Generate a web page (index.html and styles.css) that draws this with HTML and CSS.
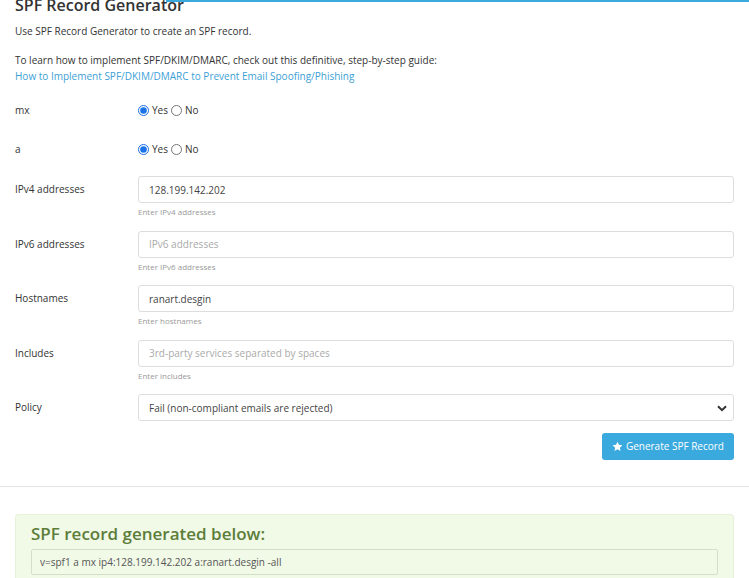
FILE: index.html
```html
<!DOCTYPE html>
<html lang="en">
<head>
    <meta charset="UTF-8">
    <meta name="viewport" content="width=device-width, initial-scale=1.0">
    <title>SPF Record Generator</title>
<link rel="stylesheet" href="styles.css">
</head>
<body>
    <div class="top-line"></div>
    <div class="page">
        <h1>SPF Record Generator</h1>
        <p class="intro">Use SPF Record Generator to create an SPF record.</p>
        <p class="intro guide">To learn how to implement SPF/DKIM/DMARC, check out this definitive, step-by-step guide:<br>
            <a href="#">How to Implement SPF/DKIM/DMARC to Prevent Email Spoofing/Phishing</a></p>

        <form class="spf-form">
            <div class="row radio-row">
                <label class="label">mx</label>
                <div class="control">
                    <label class="radio"><input type="radio" name="mx" checked> Yes</label>
                    <label class="radio"><input type="radio" name="mx"> No</label>
                </div>
            </div>
            <div class="row radio-row">
                <label class="label">a</label>
                <div class="control">
                    <label class="radio"><input type="radio" name="a" checked> Yes</label>
                    <label class="radio"><input type="radio" name="a"> No</label>
                </div>
            </div>
            <div class="row">
                <label class="label">IPv4 addresses</label>
                <div class="control">
                    <input type="text" class="field" value="128.199.142.202" placeholder="IPv4 addresses">
                    <small class="help">Enter IPv4 addresses</small>
                </div>
            </div>
            <div class="row">
                <label class="label">IPv6 addresses</label>
                <div class="control">
                    <input type="text" class="field" placeholder="IPv6 addresses">
                    <small class="help">Enter IPv6 addresses</small>
                </div>
            </div>
            <div class="row">
                <label class="label">Hostnames</label>
                <div class="control">
                    <input type="text" class="field" value="ranart.desgin" placeholder="Hostnames">
                    <small class="help">Enter hostnames</small>
                </div>
            </div>
            <div class="row">
                <label class="label">Includes</label>
                <div class="control">
                    <input type="text" class="field" placeholder="3rd-party services separated by spaces">
                    <small class="help">Enter includes</small>
                </div>
            </div>
            <div class="row">
                <label class="label">Policy</label>
                <div class="control">
                    <div class="select-wrap">
                        <select class="field">
                            <option>Fail (non-compliant emails are rejected)</option>
                            <option>SoftFail (non-compliant emails are accepted but marked)</option>
                            <option>Neutral</option>
                        </select>
                        <svg class="chevron" width="10" height="7" viewBox="0 0 10 7"><path d="M1 1.2 5 5.2 9 1.2" fill="none" stroke="#333" stroke-width="2"/></svg>
                    </div>
                </div>
            </div>
            <div class="actions">
                <button type="button" class="btn">
                    <svg width="11" height="11" viewBox="0 0 24 24"><path d="M12 1.5l3.2 6.9 7.5.9-5.5 5.2 1.4 7.4L12 18.2l-6.6 3.7 1.4-7.4L1.3 9.3l7.5-.9z" fill="#fff"/></svg>
                    Generate SPF Record
                </button>
            </div>
        </form>
    </div>
    <hr class="divider">
    <div class="page">
        <div class="result">
            <h2>SPF record generated below:</h2>
            <input type="text" class="record" value="v=spf1 a mx ip4:128.199.142.202 a:ranart.desgin -all" readonly>
        </div>
    </div>
</body>
</html>
```

FILE: styles.css
```css
body {
    font-family: "Open Sans", "Noto Sans", sans-serif;
    font-size: 10px;
    color: #333;
    margin: 0;
    padding: 0;
    background: #fff;
    overflow: hidden;
}

.top-line {
    height: 2px;
    margin-left: 166px;
    background: #3aa9de;
}

.page {
    padding: 0 15px;
}

h1 {
    font-size: 16px;
    font-weight: 600;
    color: #333;
    margin: -8px 0 0;
    line-height: 22px;
}

.intro {
    margin: 7px 0 0;
    line-height: 16px;
}

.guide {
    margin-top: 13px;
}

a {
    color: #3c9fd6;
    text-decoration: none;
}

.spf-form {
    margin-top: 12px;
}

.row {
    display: flex;
    align-items: flex-start;
    margin-bottom: 13.5px;
}

.radio-row {
    height: 28px;
    margin-bottom: 11px;
    align-items: center;
}

.radio-row + .row:not(.radio-row) {
    margin-top: 13px;
}

.label {
    width: 123px;
    flex-shrink: 0;
    line-height: 27px;
}

.control {
    flex: 1;
    display: flex;
    flex-direction: column;
}

.radio-row .control {
    flex-direction: row;
    align-items: center;
}

.radio {
    display: inline-flex;
    align-items: center;
    margin-right: 3px;
}

.radio input {
    margin: 0 3px 0 0;
    width: 11px;
    height: 11px;
    accent-color: #1a73e8;
}

.field {
    box-sizing: border-box;
    width: 100%;
    height: 27px;
    padding: 0 10px;
    border: 1px solid #ddd;
    border-radius: 3px;
    font-family: inherit;
    font-size: 10px;
    color: #444;
    background: #fff;
    outline: none;
}

.field::placeholder {
    color: #aaa;
}

.help {
    font-size: 8px;
    color: #999;
    margin-top: 3px;
    line-height: 11px;
}

.select-wrap {
    position: relative;
}

.select-wrap select {
    appearance: none;
    -webkit-appearance: none;
}

.chevron {
    position: absolute;
    right: 7px;
    top: 11px;
}

.actions {
    display: flex;
    justify-content: flex-end;
    margin-top: -2px;
}

.btn {
    display: inline-flex;
    align-items: center;
    gap: 3px;
    height: 27px;
    padding: 0 10px;
    border: none;
    border-radius: 3px;
    background: #3aa9de;
    color: #fff;
    font-family: inherit;
    font-size: 10px;
    cursor: pointer;
}

.divider {
    border: none;
    border-top: 1px solid #e5e5e5;
    margin: 26px 0 27px;
}

.result {
    background: #f1f9e7;
    border: 1px solid #e7f2da;
    border-radius: 3px;
    padding: 8px 15px 10px;
}

.result h2 {
    font-size: 17px;
    font-weight: 600;
    color: #5d7d3a;
    margin: 0 0 4px;
    line-height: 22px;
}

.record {
    box-sizing: border-box;
    width: 100%;
    height: 26px;
    padding: 0 8px;
    border: 1px solid #d3dfc6;
    border-radius: 2px;
    background: #f1f9e7;
    font-family: inherit;
    font-size: 10px;
    color: #555;
    outline: none;
}
```
